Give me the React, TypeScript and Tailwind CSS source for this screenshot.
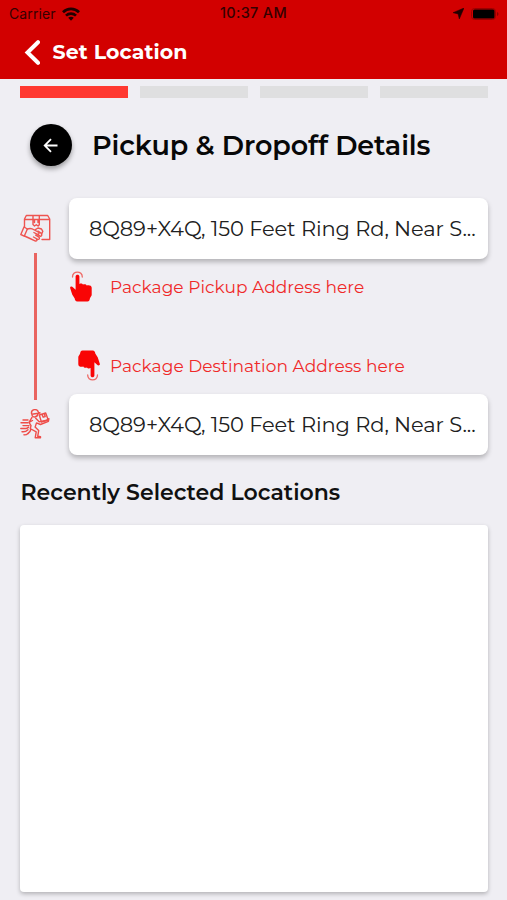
import type { ReactNode } from "react";

function StatusBar() {
  return (
    <div className="flex h-[27px] items-center px-[9px] font-['Inter',sans-serif] text-[14px] leading-none text-[#350000]">
      <div className="flex flex-1 items-center gap-[6px]">
        <span className="w-[47px] tracking-[0.1px]">Carrier</span>
        <svg className="h-[14px] w-[18px]" viewBox="0 0 18 14" fill="none" stroke="#210000" strokeWidth="2.7">
          <path d="M1 5.3C5.5.8 12.5.8 17 5.3" />
          <path d="M4 8.6c2.8-2.7 7.2-2.7 10 0" />
          <path d="M6.2 10.8 9 13.8l2.8-3c-1.5-1.5-4.1-1.5-5.6 0Z" fill="#210000" stroke="none" />
        </svg>
      </div>
      <span className="text-[14.5px] font-medium tracking-[0.3px]">10:37 AM</span>
      <div className="flex flex-1 items-center justify-end gap-[7px]">
        <svg className="h-[11px] w-[11px]" viewBox="0 0 11 11" fill="#210000">
          <path d="M11 0 6.3 11 5.1 5.9 0 4.7Z" stroke="#210000" strokeWidth=".5" />
        </svg>
        <svg className="-mr-[1px] h-[12px] w-[28px]" viewBox="0 0 28 12">
          <rect x=".5" y=".5" width="24" height="11" rx="3" fill="none" stroke="#9a0000" />
          <rect x="2" y="1.5" width="21.5" height="9" rx="1.5" fill="#000" />
          <path d="M26 4v4c2-.7 2-3.3 0-4Z" fill="#8c0000" />
        </svg>
      </div>
    </div>
  );
}

function ParcelIcon() {
  return (
    <svg className="h-[30px] w-[31px]" viewBox="0 0 31 30" fill="none" stroke="#ee5450" strokeWidth="1.4" strokeLinecap="round" strokeLinejoin="round">
      <path d="M4.5 13V5L6.3 1.5h21.4L29.7 5v20.5H22M4.5 5.5h25M13 1.5v9l1.5 1.5 1.8-1.3 1.8 1.3 1.2-1.3v-9M14.5 5.5v3M18 5.5v3" />
      <path d="M4 13 .8 20.5l3.4 1.7L7.4 15Z" />
      <path d="M7.2 15.2c3-1.4 4.8-.8 7.2.8l4 2.1c1.5 1.4-.2 2.7-1.5 2l-3-1.6M4.5 22l5.5 2.5 5 2.3c1.5.7 2.8-.7 1.4-1.7M13.5 23l4.2 2.3c1.6.5 2.4-1.3 1.2-2.2l-3.2-1.9M17 20.2l3.2 2c1.8.2 2.2-2 .8-3l-3-2M15 15.8l3-1.8 3.5 1 1.3 2.3-1.3 3.2" />
    </svg>
  );
}

function CourierIcon() {
  return (
    <svg className="h-[30px] w-[30px]" viewBox="0 0 30 30" fill="none" stroke="#ee4d49" strokeWidth="1.4" strokeLinecap="round" strokeLinejoin="round">
      <path d="M11.5 4.5c-.5-4.8 6-5.1 7-1.2l1.5.7-8.2 1.3c.4 4 5.9 3.5 6.2-.9" />
      <path d="m19.3 6 6.4-2 2.5 7-6.8 2Z M22 5.2l1.2 3 2-.6-.9-2.9" />
      <path d="M12 8.3 9 13.3l2 3.3-.7 3M15.7 9.2l3.5 3.5 2-.3 5.5-1.2 2.2-1.5-.5 2.6-8 3.2-3.9-1.6-1.4 4.2 3.6 3.5-1 5.7 2.8.5v1h-5.3l1-6-5.2-2.8c-.5 2-1.2 3.6-3 4.5M9 13.3l3.5-1.8" />
      <path d="M3 11h5M1 13.8h7M3 16.6h6M.8 19.5h5c1.2 0 2-.7 2.8-1.3M2 22.7c3 .5 4.5-.5 6-2M4 25.8c1.5.3 2.8-.3 4-1.4" />
    </svg>
  );
}

function PointingHand({ className }: { className: string }) {
  return (
    <svg className={className} viewBox="0 0 22 31" fill="#f90505">
      <path d="M5.6 5.5c0-2.4 3.8-2.4 3.8 0v7.4c1.4-.8 3.1-.5 3.6.7 1.5-.8 3.3-.3 3.7 1 1.8-.8 5-.3 5 2.2v7c0 1.3-1.3 2.3-1.8 3.7-.3 1.8-.9 3-2.4 3H7.4c-2 0-2.4-1.4-2.7-3L2.2 23.4.2 17.2c-.6-1.7 1.7-2.2 2.7-1l2.7 2.5Z" />
      <path d="M2.5 6C2.3-.6 12.5-.6 12.3 6" fill="none" stroke="#ee6965" strokeWidth="1.3" strokeLinecap="round" />
    </svg>
  );
}

function AddressCard({ children }: { children: ReactNode }) {
  return (
    <div className="flex h-[61px] items-center rounded-lg bg-white pl-[20px] text-[21px] text-[#202020] shadow-[0_3px_5px_rgba(0,0,0,0.25)]">
      <span className="whitespace-nowrap tracking-[-0.12px]">{children}</span>
    </div>
  );
}

export default function App() {
  return (
    <main className="flex h-[900px] w-[507px] flex-col overflow-hidden bg-[#efeef3] font-['Montserrat','Inter',sans-serif]">
      <header className="h-[79px] shrink-0 bg-[#d20000]">
        <StatusBar />
        <div className="flex h-[50px] items-center pl-[24px] text-white">
          <svg className="h-[25px] w-[16px]" viewBox="0 0 16 25" fill="none" stroke="currentColor" strokeWidth="4" strokeLinecap="round">
            <path d="M14 2.2 3.5 12.5 14 22.8" />
          </svg>
          <h1 className="ml-[12.5px] text-[20.5px] font-bold tracking-[0.1px]">Set Location</h1>
        </div>
      </header>

      <div className="ml-[20px] mr-[19px] mt-[7px] grid h-[12px] shrink-0 grid-cols-4 gap-[12px]">
        <div className="bg-[#ff3830]" />
        <div className="bg-[#dfdfe0]" />
        <div className="bg-[#dfdfe0]" />
        <div className="bg-[#dfdfe0]" />
      </div>

      <div className="mt-[26px] flex h-[42px] shrink-0 items-center pl-[30px]">
        <button className="flex size-[42px] items-center justify-center rounded-full bg-black shadow-[0_3px_5px_rgba(0,0,0,0.35)]">
          <svg className="-ml-[2px] h-[15px] w-[15px]" viewBox="0 0 15 15" fill="none" stroke="white" strokeWidth="1.8">
            <path d="M14.5 7.5H2M8 1.2 1.7 7.5 8 13.8" />
          </svg>
        </button>
        <h2 className="ml-[20px] mt-[2px] whitespace-nowrap text-[27px] font-semibold tracking-[-0.1px] text-[#080808]">Pickup &amp; Dropoff Details</h2>
      </div>

      <section className="mt-[32px] flex h-[257px] shrink-0 pl-[20px] pr-[19px]">
        <div className="flex w-[49px] flex-col">
          <div className="mt-[16px] h-[30px]"><ParcelIcon /></div>
          <div className="ml-[14px] mt-[9px] h-[147px] w-[2.5px] bg-[#e96460]" />
          <div className="mt-[9px]"><CourierIcon /></div>
        </div>
        <div className="flex-1">
          <AddressCard>8Q89+X4Q, 150 Feet Ring Rd, Near S...</AddressCard>
          <div className="mt-[12px] flex h-[31px] items-center">
            <PointingHand className="ml-[1px] h-[31px] w-[22px]" />
            <span className="ml-[18px] mt-[2px] whitespace-nowrap text-[17px] tracking-[0.04px] text-[#ef2929]">Package Pickup Address here</span>
          </div>
          <div className="mt-[48px] flex h-[31px] items-center">
            <PointingHand className="ml-[9px] h-[31px] w-[22px] rotate-180" />
            <span className="ml-[10px] mt-[2px] whitespace-nowrap text-[17px] tracking-[0.05px] text-[#ef2929]">Package Destination Address here</span>
          </div>
          <div className="mt-[13px]">
            <AddressCard>8Q89+X4Q, 150 Feet Ring Rd, Near S...</AddressCard>
          </div>
        </div>
      </section>

      <h3 className="ml-[20.5px] mt-[22px] flex h-[30px] shrink-0 items-center whitespace-nowrap text-[22px] font-semibold text-[#101010]">Recently Selected Locations</h3>
      <div className="ml-[20px] mr-[19px] mt-[18px] h-[367px] shrink-0 rounded-[4px] bg-white shadow-[0_2px_4px_rgba(0,0,0,0.25)]" />
    </main>
  );
}
